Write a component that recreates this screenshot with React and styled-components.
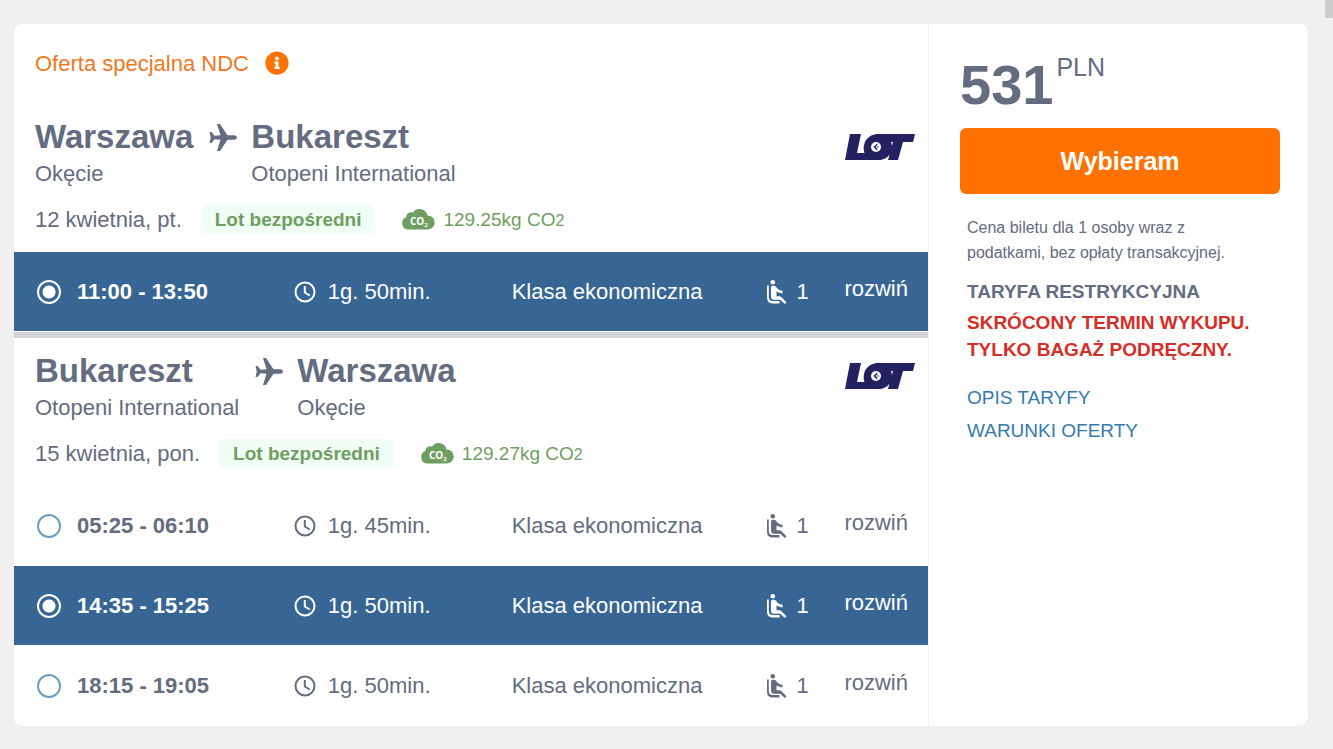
import React, { useState } from "react";
import styled, { createGlobalStyle } from "styled-components";
import { FaInfoCircle } from "react-icons/fa";

const GlobalStyle = createGlobalStyle`
    * {
        box-sizing: border-box;
    }

    body {
        margin: 0;
        background-color: #f0f0f0;
        color: #646c80;
        font-family: Arial, "Liberation Sans", sans-serif;
        font-size: 22px;
    }
`;

const Page = styled.main`
    position: relative;
    padding: 24px 25px 23px 14px;
`;

// Scrollbar end in the corner of the page
const ScrollThumb = styled.div`
    position: absolute;
    top: 0;
    right: 0;
    width: 8px;
    height: 18px;
    background-color: #cdcdcd;
`;

const Card = styled.article`
    display: flex;
    background-color: #fff;
    border-radius: 8px;
    overflow: hidden;
    box-shadow: 0 0 2px rgba(0, 0, 0, 0.06);
`;

const Flights = styled.div`
    flex: 1;
    min-width: 0;
`;

const OfferHeader = styled.header`
    display: flex;
    align-items: center;
    gap: 16px;
    height: 80px;
    padding: 0 21px;
    color: #f07820;
`;

const InfoButton = styled.button`
    display: flex;
    padding: 0 0 3px;
    border: 0;
    background: none;
    color: #ff7200;
    font-size: 24px;
    cursor: pointer;
`;

const Carrier = styled.div`
    padding-top: 17px;
`;

const Leg = styled.section`
    & + & {
        border-top: 6px solid #d0d4d9;
    }

    & + & ${Carrier} {
        padding-top: 12px;
    }
`;

const LegHeader = styled.div`
    display: flex;
    justify-content: space-between;
    padding: 13px 13px 18px 21px;
`;

const Route = styled.div`
    display: flex;
`;

const City = styled.h2`
    margin: 0;
    font-size: 33px;
    line-height: 40px;
`;

const Airport = styled.p`
    margin: 0;
    line-height: 34px;
`;

const Plane = styled.svg`
    width: 28px;
    height: 27px;
    margin: 7px 14px 0 16px;
    fill: currentColor;
`;

const Details = styled.div`
    display: flex;
    align-items: center;
    height: 29px;
    margin-top: 14px;
`;

const Direct = styled.span`
    margin: 0 27px 0 19px;
    padding: 0 14px;
    border-radius: 5px;
    background-color: #effdf4;
    color: #6f9e62;
    font-size: 19px;
    font-weight: bold;
    line-height: 29px;
`;

const Emission = styled.span`
    display: flex;
    align-items: center;
    gap: 8px;
    color: #6f9e62;
    font-size: 19px;

    small {
        font-size: 16px;
    }
`;

const Option = styled.div`
    display: grid;
    grid-template-columns: 257fr 218fr 255fr 78fr 63fr;
    align-items: center;
    height: 80px;
    padding: 0 20px 0 23px;
    border-bottom: 1px solid #fff;
    background-color: ${props => (props.$active ? "#376694" : "#fff")};
    color: ${props => (props.$active ? "#fff" : "#646c80")};
    white-space: nowrap;
`;

const Time = styled.label`
    display: flex;
    align-items: center;
    gap: 16px;
    font-weight: bold;
    cursor: pointer;
`;

const Radio = styled.input`
    appearance: none;
    width: 24px;
    height: 24px;
    margin: 0;
    border: 2px solid #6d9dc0;
    border-radius: 50%;

    &:checked {
        border-color: #fff;
        background: radial-gradient(circle, #fff 6px, transparent 7px);
    }
`;

const Cell = styled.span`
    display: flex;
    align-items: center;
    gap: ${props => props.$gap || 0}px;
`;

const Expand = styled.button`
    padding: 0 0 5px;
    border: 0;
    background: none;
    color: inherit;
    font: inherit;
    cursor: pointer;
`;

const Summary = styled.aside`
    width: 380px;
    padding: 31px 28px 0 31px;
    border-left: 1px solid #f0f0f2;
`;

const Price = styled.p`
    display: flex;
    gap: 3px;
    margin: 0;
    font-size: 56px;
    font-weight: bold;
    line-height: 60px;
`;

const Currency = styled.span`
    font-size: 25px;
    font-weight: normal;
    line-height: 24px;
`;

const ChooseButton = styled.button`
    width: 100%;
    height: 66px;
    margin-top: 13px;
    border: 0;
    border-radius: 6px;
    background-color: #ff7200;
    color: #fff;
    font-family: inherit;
    font-size: 25px;
    font-weight: bold;
    cursor: pointer;
`;

const Terms = styled.div`
    padding: 21px 0 0 7px;
    font-size: 19px;
`;

const PriceNote = styled.p`
    max-width: 280px;
    margin: 0 0 13px;
    font-size: 16px;
    line-height: 25px;
`;

const Fare = styled.p`
    margin: 0;
    font-weight: bold;
    line-height: 27px;
`;

const Warning = styled.p`
    margin: 4px 0 18px;
    color: #d62e26;
    font-weight: bold;
    line-height: 27px;
    white-space: nowrap;
`;

const TermsLink = styled.a`
    display: block;
    color: #337ab0;
    line-height: 33px;
    text-decoration: none;
`;

function PlaneIcon() {
    return (
        <Plane viewBox="0 0 28 27" aria-hidden="true">
            <path d="M8 0h3l7.500 11.300H25.500q2.500.4 2.500 2.200t-2.500 2.200H18.500L11 27H8l3.500-11.300-6-.4L2.600 19H.5l1.300-5.500L.5 8h2.100l2.900 3.700 6-.4z" />
        </Plane>
    );
}

function ClockIcon() {
    return (
        <svg width="22" height="22" viewBox="0 0 22 22" fill="none" stroke="currentColor" strokeWidth="2" aria-hidden="true">
            <circle cx="11" cy="11" r="9.500" />
            <path d="M10.800 5v6.500l5 3" />
        </svg>
    );
}

function SeatIcon() {
    return (
        <svg width="21" height="24" viewBox="0 0 21 24" fill="currentColor" aria-hidden="true">
            <circle cx="6.800" cy="2.300" r="2.300" />
            <path d="M1 5.500h1.800v11.500q0 4 4 4h6.700v2.500H6.500Q1 23.300 1 17.500z" />
            <path d="M5 7.500q0-1.800 1.800-1.800h1.400q1 0 1.800 1l1.600 2q1.900 1.900 4.900 2v2.700q-3.300-.1-6-1.800v4.600h2.500q1.300 0 2.200.9l5.300 5.100-1.700 1.700-4.500-4.200H7.800Q5 19.500 5 16.800z" />
        </svg>
    );
}

function LotLogo() {
    return (
        <svg width="70" height="26" viewBox="0 0 70 26" role="img" aria-label="LOT">
            <path
                fill="#23215f"
                d="M5 0h11l-4 19h7.500C16.500 9 23 0 33 0h37l-2 8H58l-5 18H43l5-18h-2c3 8-2 18-12 18H0z"
            />
            <circle cx="31" cy="13" r="5" fill="#fff" />
            <path fill="#23215f" d="M28.500 13l4-4-.5 2.500 2 1.500-2 1.500.5 2.500z" />
            <circle cx="31.800" cy="13" r="1" fill="#fff" />
        </svg>
    );
}

function CloudIcon() {
    return (
        <svg width="33" height="21" viewBox="0 0 33 21" aria-hidden="true">
            <path
                fill="#6f9e62"
                d="M6.500 20.500A6.500 6.500 0 0 1 4.200 8 5 5 0 0 1 11 3.500 8 8 0 0 1 25.500 6.500 7 7 0 0 1 26 20.500z"
            />
            <text x="8" y="16" fill="#fff" fontFamily="Open Sans, sans-serif" fontSize="10" fontWeight="bold">
                CO
                <tspan fontSize="6" dy="2">2</tspan>
            </text>
        </svg>
    );
}

const legs = [
    {
        id: "outbound",
        from: { city: "Warszawa", airport: "Okęcie" },
        to: { city: "Bukareszt", airport: "Otopeni International" },
        date: "12 kwietnia, pt.",
        emission: "129.25kg CO",
        selected: 0,
        options: [{ time: "11:00 - 13:50", duration: "1g. 50min." }],
    },
    {
        id: "return",
        from: { city: "Bukareszt", airport: "Otopeni International" },
        to: { city: "Warszawa", airport: "Okęcie" },
        date: "15 kwietnia, pon.",
        emission: "129.27kg CO",
        selected: 1,
        options: [
            { time: "05:25 - 06:10", duration: "1g. 45min." },
            { time: "14:35 - 15:25", duration: "1g. 50min." },
            { time: "18:15 - 19:05", duration: "1g. 50min." },
        ],
    },
];

function FlightLeg({ leg }) {
    const [selected, setSelected] = useState(leg.selected);

    return (
        <Leg>
            <LegHeader>
                <div>
                    <Route>
                        <div>
                            <City>{leg.from.city}</City>
                            <Airport>{leg.from.airport}</Airport>
                        </div>
                        <PlaneIcon />
                        <div>
                            <City>{leg.to.city}</City>
                            <Airport>{leg.to.airport}</Airport>
                        </div>
                    </Route>
                    <Details>
                        <span>{leg.date}</span>
                        <Direct>Lot bezpośredni</Direct>
                        <Emission>
                            <CloudIcon />
                            <span>{leg.emission}<small>2</small></span>
                        </Emission>
                    </Details>
                </div>
                <Carrier>
                    <LotLogo />
                </Carrier>
            </LegHeader>
            {leg.options.map((option, index) => (
                <Option key={option.time} $active={index === selected}>
                    <Time>
                        <Radio
                            type="radio"
                            name={leg.id}
                            checked={index === selected}
                            onChange={() => setSelected(index)}
                        />
                        {option.time}
                    </Time>
                    <Cell $gap={12}><ClockIcon />{option.duration}</Cell>
                    <Cell>Klasa ekonomiczna</Cell>
                    <Cell $gap={9}><SeatIcon />1</Cell>
                    <Expand type="button">rozwiń</Expand>
                </Option>
            ))}
        </Leg>
    );
}

function App() {
    return (
        <Page>
            <GlobalStyle />
            <ScrollThumb />
            <Card>
                <Flights>
                    <OfferHeader>
                        <span>Oferta specjalna NDC</span>
                        <InfoButton type="button" aria-label="Informacje"><FaInfoCircle /></InfoButton>
                    </OfferHeader>
                    {legs.map(leg => <FlightLeg key={leg.id} leg={leg} />)}
                </Flights>
                <Summary>
                    <Price>531<Currency>PLN</Currency></Price>
                    <ChooseButton type="button">Wybieram</ChooseButton>
                    <Terms>
                        <PriceNote>Cena biletu dla 1 osoby wraz z podatkami, bez opłaty transakcyjnej.</PriceNote>
                        <Fare>TARYFA RESTRYKCYJNA</Fare>
                        <Warning>SKRÓCONY TERMIN WYKUPU.<br />TYLKO BAGAŻ PODRĘCZNY.</Warning>
                        <TermsLink href="#opis">OPIS TARYFY</TermsLink>
                        <TermsLink href="#warunki">WARUNKI OFERTY</TermsLink>
                    </Terms>
                </Summary>
            </Card>
        </Page>
    );
}

export default App;
